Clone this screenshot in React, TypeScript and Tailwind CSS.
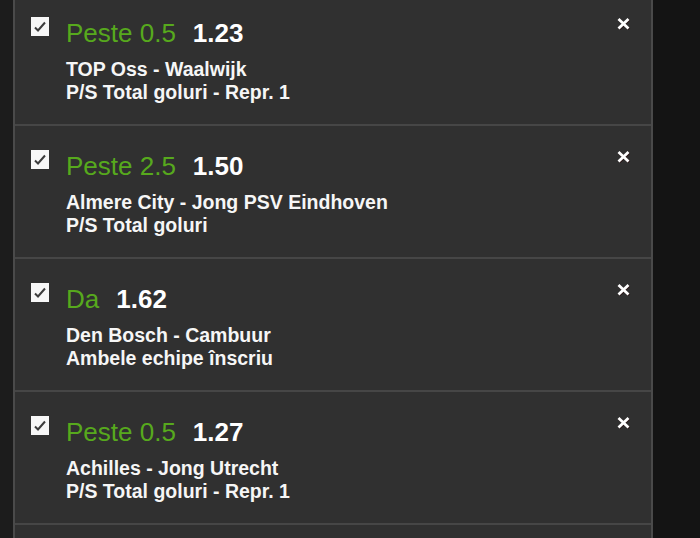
import React from "react";

type Bet = {
  pick: string;
  odds: string;
  match: string;
  market: string;
};

const bets: Bet[] = [
  { pick: "Peste 0.5", odds: "1.23", match: "TOP Oss - Waalwijk", market: "P/S Total goluri - Repr. 1" },
  { pick: "Peste 2.5", odds: "1.50", match: "Almere City - Jong PSV Eindhoven", market: "P/S Total goluri" },
  { pick: "Da", odds: "1.62", match: "Den Bosch - Cambuur", market: "Ambele echipe înscriu" },
  { pick: "Peste 0.5", odds: "1.27", match: "Achilles - Jong Utrecht", market: "P/S Total goluri - Repr. 1" },
];

function CheckBox() {
  return (
    <div className="w-[18px] h-[19px] shrink-0 bg-[#f7f7f7] flex items-center justify-center">
      <svg width="18" height="19" viewBox="0 0 18 19">
        <path d="M4 10.5 L7 13.5 L14 5.5" fill="none" stroke="#3c3c3c" strokeWidth="2" />
      </svg>
    </div>
  );
}

function CloseIcon() {
  return (
    <svg width="15" height="13" viewBox="0 0 15 13" className="shrink-0">
      <path d="M2.5 2 L12.5 11.5 M12.5 2 L2.5 11.5" stroke="#2a1616" strokeWidth="3" transform="translate(0.6 0.6)" />
      <path d="M2.5 2 L12.5 11.5 M12.5 2 L2.5 11.5" stroke="#ffffff" strokeWidth="2.8" />
    </svg>
  );
}

function BetRow({ bet }: { bet: Bet }) {
  return (
    <div className="h-[133px] shrink-0 border-b-2 border-[#464646] flex items-start pt-[24px] pl-[16px] pr-[20px]">
      <CheckBox />
      <div className="ml-[17px] flex-1 pt-[1px]">
        <div className="text-[26px] leading-[30px] flex items-baseline">
          <span className="text-[#57a91d]">{bet.pick}</span>
          <span className="ml-[17px] font-bold text-white">{bet.odds}</span>
        </div>
        <div className="mt-[10px] text-[19.5px] leading-[23px] font-bold text-[#f6f6f6]">
          <div>{bet.match}</div>
          <div>{bet.market}</div>
        </div>
      </div>
      <CloseIcon />
    </div>
  );
}

export default function App() {
  return (
    <div
      className="w-[700px] h-[538px] overflow-hidden flex bg-[#151515]"
      style={{ fontFamily: '"Liberation Sans", Arial, sans-serif' }}
    >
      <div className="w-[13px] shrink-0 bg-[#1c1c1c]" />
      <div className="w-[640px] shrink-0 bg-[#303030] border-l-2 border-r-2 border-[#4a4a4a] flex flex-col">
        <div className="-mt-[7px] flex flex-col">
          {bets.map((b, i) => (
            <BetRow key={i} bet={b} />
          ))}
        </div>
      </div>
      <div className="flex-1 bg-[#141414]" />
    </div>
  );
}
